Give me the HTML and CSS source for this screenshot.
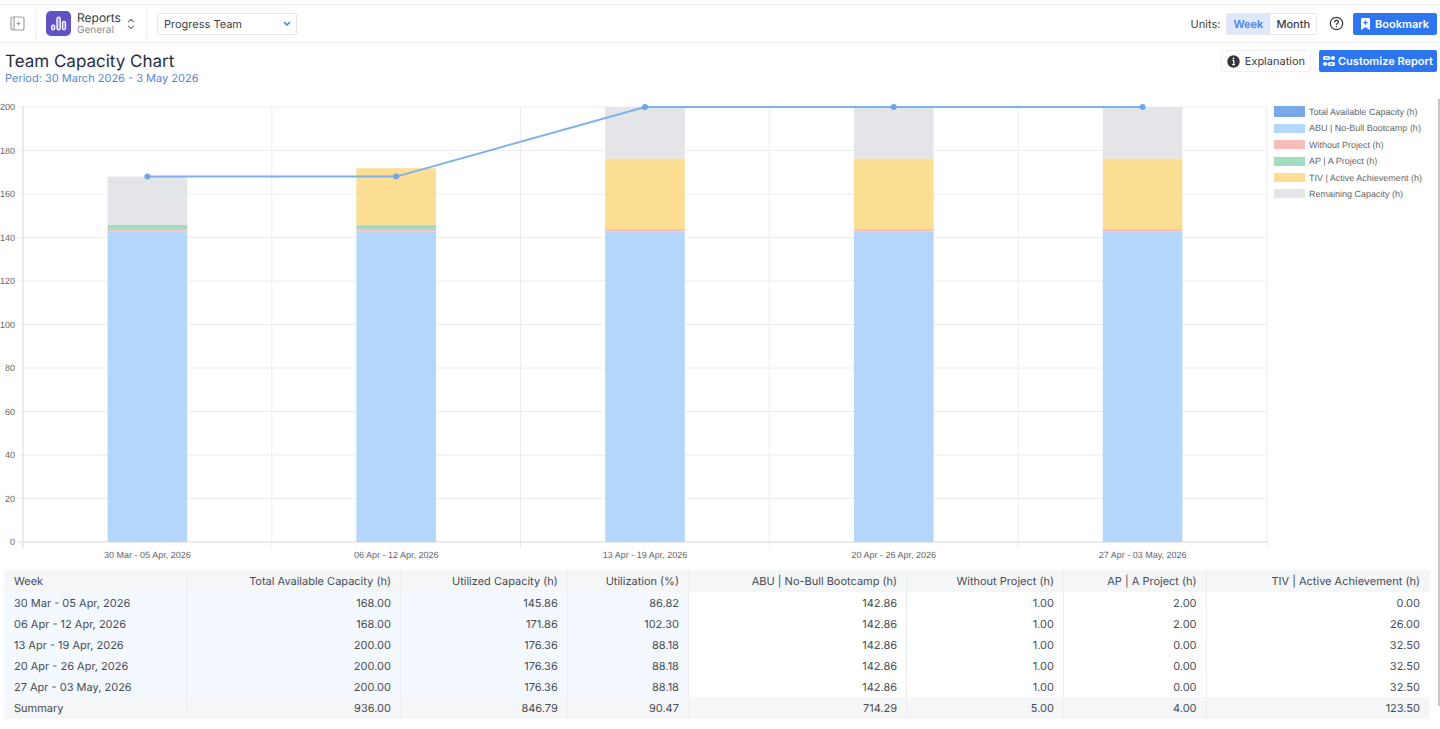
FILE: index.html
```
<!DOCTYPE html>
<html lang="en">
<head>
<meta charset="utf-8">
<meta name="viewport" content="width=device-width, initial-scale=1">
<title>Team Capacity Chart</title>
<link rel="stylesheet" href="styles.css">
</head>
<body>

<header class="topbar">
  <button class="icon-btn sidebar-toggle" type="button" aria-label="Toggle sidebar">
    <svg width="15" height="15" viewBox="0 0 15 15" fill="none" stroke="#a0a0a4" stroke-width="1.2">
      <rect x="1" y="1" width="13" height="13" rx="2"/>
      <path d="M4 1v13M6.5 7.5h4M8.5 5.5v4"/>
    </svg>
  </button>
  <button class="module" type="button">
    <svg class="module-logo" width="25" height="25" viewBox="0 0 25 25">
      <rect width="25" height="25" rx="5" fill="#6152c4"/>
      <g fill="#8f84dc" stroke="#fff" stroke-width="1.3">
        <rect x="5.7" y="14.2" width="3" height="4.6" rx="1.5"/>
        <rect x="11" y="6.2" width="3.2" height="12.6" rx="1.6"/>
        <rect x="16.5" y="10.4" width="3" height="8.4" rx="1.5"/>
      </g>
    </svg>
    <span class="module-text">
      <span class="module-name">Reports</span>
      <span class="module-sub">General</span>
    </span>
    <svg width="8" height="12" viewBox="0 0 8 12" fill="none" stroke="#77777c" stroke-width="1.2" stroke-linecap="round" stroke-linejoin="round">
      <path d="M1.5 3.8L4 1.3l2.5 2.5M1.5 8.2L4 10.7l2.5-2.5"/>
    </svg>
  </button>
  <div class="team-select">
    <select aria-label="Team">
      <option>Progress Team</option>
    </select>
    <svg width="8" height="6" viewBox="0 0 8 6" fill="none" stroke="#3f7fe0" stroke-width="1.6" stroke-linecap="round" stroke-linejoin="round">
      <path d="M1.5 1.5L4 4l2.5-2.5"/>
    </svg>
  </div>
  <div class="topbar-right">
    <span class="units-label" id="units">Units:</span>
    <div class="units" role="group" aria-labelledby="units">
      <button class="unit active" type="button">Week</button>
      <button class="unit" type="button">Month</button>
    </div>
    <button class="icon-btn help" type="button" aria-label="Help">
      <svg width="15" height="15" viewBox="0 0 15 15" fill="none" stroke="#3a3d45" stroke-width="1.3" stroke-linecap="round">
        <circle cx="7.5" cy="7.5" r="6.2"/>
        <path d="M5.7 6c0-2.4 3.7-2.3 3.7-.1 0 1.3-1.9 1.3-1.9 2.6"/>
        <path d="M7.5 10.6v.1"/>
      </svg>
    </button>
    <button class="btn btn-primary" type="button">
      <svg width="9" height="12" viewBox="0 0 9 12">
        <path d="M1.2 0h6.6Q9 0 9 1.2V12L4.5 9 0 12V1.2Q0 0 1.2 0z" fill="#fff"/>
        <path d="M4.5 2.4v4.4M2.3 4.6h4.4" stroke="#2d76f0" stroke-width="1.2"/>
      </svg>
      Bookmark
    </button>
  </div>
</header>

<div class="titlebar">
  <div>
    <h1>Team Capacity Chart</h1>
    <p class="period">Period: 30 March 2026 - 3 May 2026</p>
  </div>
  <div class="actions">
    <button class="btn btn-plain" type="button">
      <svg width="13" height="13" viewBox="0 0 13 13">
        <circle cx="6.5" cy="6.5" r="6.2" fill="#33363f"/>
        <path d="M5.4 5.6h1.4v3.8M5.2 9.6h2.8" fill="none" stroke="#fff" stroke-width="1.2"/>
        <circle cx="6.5" cy="3.5" r=".9" fill="#fff"/>
      </svg>
      Explanation
    </button>
    <button class="btn btn-primary btn-tight" type="button">
      <svg width="12" height="12" viewBox="0 0 12 12">
        <rect x="0" y="1" width="7" height="4" rx="1.6" fill="#fff"/>
        <rect x="5" y="7" width="7" height="4" rx="1.6" fill="#fff"/>
        <path d="M7 3h4M1 9h4" stroke="#fff" stroke-width="1.2"/>
        <circle cx="10" cy="3" r="2" fill="#fff"/>
        <circle cx="2" cy="9" r="2" fill="#fff"/>
        <path d="M2 3h3.5M6.5 9H10" stroke="#2d76f0" stroke-width="1"/>
      </svg>
      Customize Report
    </button>
  </div>
</div>

<main class="report">
  <div class="report-body">
    <section class="chart">
      <div class="y-axis">
        <span>200</span><span>180</span><span>160</span><span>140</span><span>120</span><span>100</span><span>80</span><span>60</span><span>40</span><span>20</span><span>0</span>
      </div>
      <div class="plot-area">
        <!-- one unit high = one hour, 100 units wide = one week -->
        <svg class="plot" viewBox="0 0 500 200" preserveAspectRatio="none" role="img" aria-label="Team capacity by week">
          <path class="grid" d="M-2 0H500M-2 20H500M-2 40H500M-2 60H500M-2 80H500M-2 100H500M-2 120H500M-2 140H500M-2 160H500M-2 180H500M100 0V203M200 0V203M300 0V203M400 0V203M500 0V203"/>
          <path class="axis" d="M0 0V203M-2 200H500"/>
          <g class="abu">
            <rect x="34" y="57.14" width="32" height="142.86"/>
            <rect x="134" y="57.14" width="32" height="142.86"/>
            <rect x="234" y="57.14" width="32" height="142.86"/>
            <rect x="334" y="57.14" width="32" height="142.86"/>
            <rect x="434" y="57.14" width="32" height="142.86"/>
          </g>
          <g class="without">
            <rect x="34" y="56.14" width="32" height="1"/>
            <rect x="134" y="56.14" width="32" height="1"/>
            <rect x="234" y="56.14" width="32" height="1"/>
            <rect x="334" y="56.14" width="32" height="1"/>
            <rect x="434" y="56.14" width="32" height="1"/>
          </g>
          <g class="ap">
            <rect x="34" y="54.14" width="32" height="2"/>
            <rect x="134" y="54.14" width="32" height="2"/>
          </g>
          <g class="tiv">
            <rect x="134" y="28.14" width="32" height="26"/>
            <rect x="234" y="23.64" width="32" height="32.5"/>
            <rect x="334" y="23.64" width="32" height="32.5"/>
            <rect x="434" y="23.64" width="32" height="32.5"/>
          </g>
          <g class="remaining">
            <rect x="34" y="32" width="32" height="22.14"/>
            <rect x="234" y="0" width="32" height="23.64"/>
            <rect x="334" y="0" width="32" height="23.64"/>
            <rect x="434" y="0" width="32" height="23.64"/>
          </g>
          <path class="line" d="M50 32L150 32L250 0L350 0L450 0"/>
          <path class="points" d="M50 32h0M150 32h0M250 0h0M350 0h0M450 0h0"/>
        </svg>
        <div class="x-axis">
          <span>30 Mar - 05 Apr, 2026</span>
          <span>06 Apr - 12 Apr, 2026</span>
          <span>13 Apr - 19 Apr, 2026</span>
          <span>20 Apr - 26 Apr, 2026</span>
          <span>27 Apr - 03 May, 2026</span>
        </div>
      </div>
      <ul class="legend">
        <li><i class="swatch total"></i>Total Available Capacity (h)</li>
        <li><i class="swatch abu"></i>ABU | No-Bull Bootcamp (h)</li>
        <li><i class="swatch without"></i>Without Project (h)</li>
        <li><i class="swatch ap"></i>AP | A Project (h)</li>
        <li><i class="swatch tiv"></i>TIV | Active Achievement (h)</li>
        <li><i class="swatch remaining"></i>Remaining Capacity (h)</li>
      </ul>
    </section>

    <table class="capacity">
      <colgroup>
        <col class="col-week"><col class="col-total"><col class="col-used"><col class="col-pct">
        <col class="col-abu"><col class="col-without"><col class="col-ap"><col class="col-tiv">
      </colgroup>
      <thead>
        <tr><th>Week</th><th>Total Available Capacity (h)</th><th>Utilized Capacity (h)</th><th>Utilization (%)</th><th>ABU | No-Bull Bootcamp (h)</th><th>Without Project (h)</th><th>AP | A Project (h)</th><th>TIV | Active Achievement (h)</th></tr>
      </thead>
      <tbody>
        <tr><td>30 Mar - 05 Apr, 2026</td><td>168.00</td><td>145.86</td><td>86.82</td><td>142.86</td><td>1.00</td><td>2.00</td><td>0.00</td></tr>
        <tr><td>06 Apr - 12 Apr, 2026</td><td>168.00</td><td>171.86</td><td>102.30</td><td>142.86</td><td>1.00</td><td>2.00</td><td>26.00</td></tr>
        <tr><td>13 Apr - 19 Apr, 2026</td><td>200.00</td><td>176.36</td><td>88.18</td><td>142.86</td><td>1.00</td><td>0.00</td><td>32.50</td></tr>
        <tr><td>20 Apr - 26 Apr, 2026</td><td>200.00</td><td>176.36</td><td>88.18</td><td>142.86</td><td>1.00</td><td>0.00</td><td>32.50</td></tr>
        <tr><td>27 Apr - 03 May, 2026</td><td>200.00</td><td>176.36</td><td>88.18</td><td>142.86</td><td>1.00</td><td>0.00</td><td>32.50</td></tr>
      </tbody>
      <tfoot>
        <tr><td>Summary</td><td>936.00</td><td>846.79</td><td>90.47</td><td>714.29</td><td>5.00</td><td>4.00</td><td>123.50</td></tr>
      </tfoot>
    </table>
  </div>
  <div class="scroll-thumb"></div>
</main>

</body>
</html>
```
FILE: styles.css
```
* {
  box-sizing: border-box;
}

body {
  margin: 0;
  background: #fff;
  color: #3a3d45;
  font-family: Inter, "Liberation Sans", sans-serif;
  font-size: 11px;
  line-height: 16px;
  text-rendering: geometricPrecision;
}

button, select {
  font: inherit;
  color: inherit;
  text-rendering: inherit;
}

svg {
  display: block;
  flex: none;
}

/* top bar */

.topbar {
  display: flex;
  align-items: center;
  height: 39px;
  margin-top: 4px;
  border-top: 1px solid #f1f1f3;
  border-bottom: 1px solid #f1f1f3;
}

.icon-btn {
  padding: 0;
  border: 0;
  background: none;
}

.sidebar-toggle {
  margin: 0 11px 0 10px;
}

.module {
  display: flex;
  align-items: center;
  height: 31px;
  padding: 0 11px 0 9px;
  border: 1px solid #f1f1f3;
  border-width: 0 1px;
  background: none;
  text-align: left;
}

.module-text {
  display: flex;
  flex-direction: column;
  width: 42px;
  margin: 0 8px 0 6px;
}

.module-name {
  font-size: 12px;
  line-height: 13px;
}

.module-sub {
  color: #8c8c92;
  font-size: 10px;
  line-height: 12px;
}

.team-select {
  position: relative;
  width: 140px;
  margin-left: 10px;
}

.team-select select {
  display: block;
  width: 100%;
  height: 22px;
  padding: 0 20px 0 6px;
  border: 1px solid #e6e7ea;
  border-radius: 2px;
  background: #fff;
  appearance: none;
}

.team-select svg {
  position: absolute;
  top: 8px;
  right: 6px;
  pointer-events: none;
}

.topbar-right {
  display: flex;
  align-items: center;
  margin-left: auto;
  padding-right: 3px;
}

.units {
  display: flex;
  margin: 0 12px 0 6px;
  border: 1px solid #e6e8ee;
  border-radius: 2px;
}

.unit {
  height: 20px;
  padding: 0 6px;
  border: 0;
  background: #fff;
  font-weight: 500;
}

.unit + .unit {
  border-left: 1px solid #d9e0ee;
}

.unit.active {
  background: #dfe8fb;
  color: #4583ee;
  font-weight: 600;
}

.help {
  margin-right: 9px;
}

.btn {
  display: flex;
  align-items: center;
  gap: 5px;
  height: 22px;
  padding: 0 8px;
  border: 0;
  border-radius: 2px;
  white-space: nowrap;
}

.btn-primary {
  background: #2d76f0;
  color: #fff;
  font-weight: 600;
}

.btn-tight {
  gap: 3px;
  padding: 0 4px;
}

.btn-plain {
  padding: 0 5px;
  border: 1px solid #f1f1f3;
  background: #fff;
}

/* title */

.titlebar {
  display: flex;
  justify-content: space-between;
  align-items: flex-start;
  padding: 7px 3px 0 5px;
}

h1 {
  margin: 2px 0 0;
  color: #2a2d44;
  font-size: 17px;
  font-weight: 400;
  line-height: 20px;
}

.period {
  margin: 0;
  color: #5589cf;
  line-height: 12px;
}

.actions {
  display: flex;
  gap: 8px;
}

/* report */

.report {
  display: flex;
  margin-top: 15px;
}

.report-body {
  flex: 1;
  min-width: 0;
  padding: 8px 8px 0 0;
}

.scroll-thumb {
  width: 2px;
  margin-bottom: 13px;
  background: #c6c6c8;
}

.chart {
  display: flex;
  color: #666;
  font-family: "Liberation Sans", Arial, sans-serif;
  font-size: 9px;
  line-height: 10px;
}

.y-axis {
  display: flex;
  flex-direction: column;
  justify-content: space-between;
  width: 23px;
  height: 445px;
  margin-top: -5px;
  padding-right: 8px;
  text-align: right;
}

.plot-area {
  flex: 1;
  min-width: 0;
}

.plot {
  width: 100%;
  height: 435px;
  overflow: visible;
}

.plot path {
  fill: none;
  vector-effect: non-scaling-stroke;
}

.plot .grid {
  stroke: #ececee;
  shape-rendering: crispEdges;
}

.plot .axis {
  stroke: #d8d8da;
  shape-rendering: crispEdges;
}

.plot .line {
  stroke: #7fb0ea;
  stroke-width: 2px;
}

.plot .points {
  stroke: #70a6e6;
  stroke-width: 6px;
  stroke-linecap: round;
}

.x-axis {
  display: grid;
  grid-template-columns: repeat(5, 1fr);
  padding-top: 8px;
  text-align: center;
}

.legend {
  display: flex;
  flex-direction: column;
  justify-content: space-between;
  width: 163px;
  height: 93px;
  margin: -1px 0 0;
  padding: 0 0 0 7px;
  list-style: none;
}

.legend li {
  display: flex;
  align-items: center;
  gap: 4px;
  white-space: nowrap;
}

.swatch {
  width: 31px;
  height: 9px;
}

.swatch.total { height: 11px; background: #78a7ea; }
.abu { fill: #b5d6fb; background: #b5d6fb; }
.without { fill: #f8bcba; background: #f8bcba; }
.ap { fill: #a2dbbf; background: #a2dbbf; }
.tiv { fill: #fbdd93; background: #fbdd93; }
.remaining { fill: #e3e5e8; background: #e3e5e8; }
.plot g { background: none; }

/* table */

.capacity {
  width: calc(100% - 4px);
  margin: 10px 0 0 4px;
  border-collapse: collapse;
  table-layout: fixed;
  color: #474b54;
}

.col-week { width: 12.8%; }
.col-total { width: 15%; }
.col-used { width: 11.7%; }
.col-pct { width: 8.5%; }
.col-abu { width: 15.3%; }
.col-without { width: 11%; }
.col-ap { width: 10%; }
.col-tiv { width: 15.7%; }

.capacity th,
.capacity td {
  height: 21px;
  padding: 0 9px 0 10px;
  border-right: 1px solid #ebeef1;
  font-weight: 400;
  text-align: right;
  white-space: nowrap;
}

.capacity th:first-child,
.capacity td:first-child {
  text-align: left;
}

.capacity th:last-child,
.capacity td:last-child {
  padding-right: 10px;
  border-right: 0;
}

.capacity tbody td:nth-child(-n+4) {
  background: #f3f9ff;
}

.capacity th,
.capacity tfoot td {
  height: 22px;
  background: #f4f6f8;
}
```
